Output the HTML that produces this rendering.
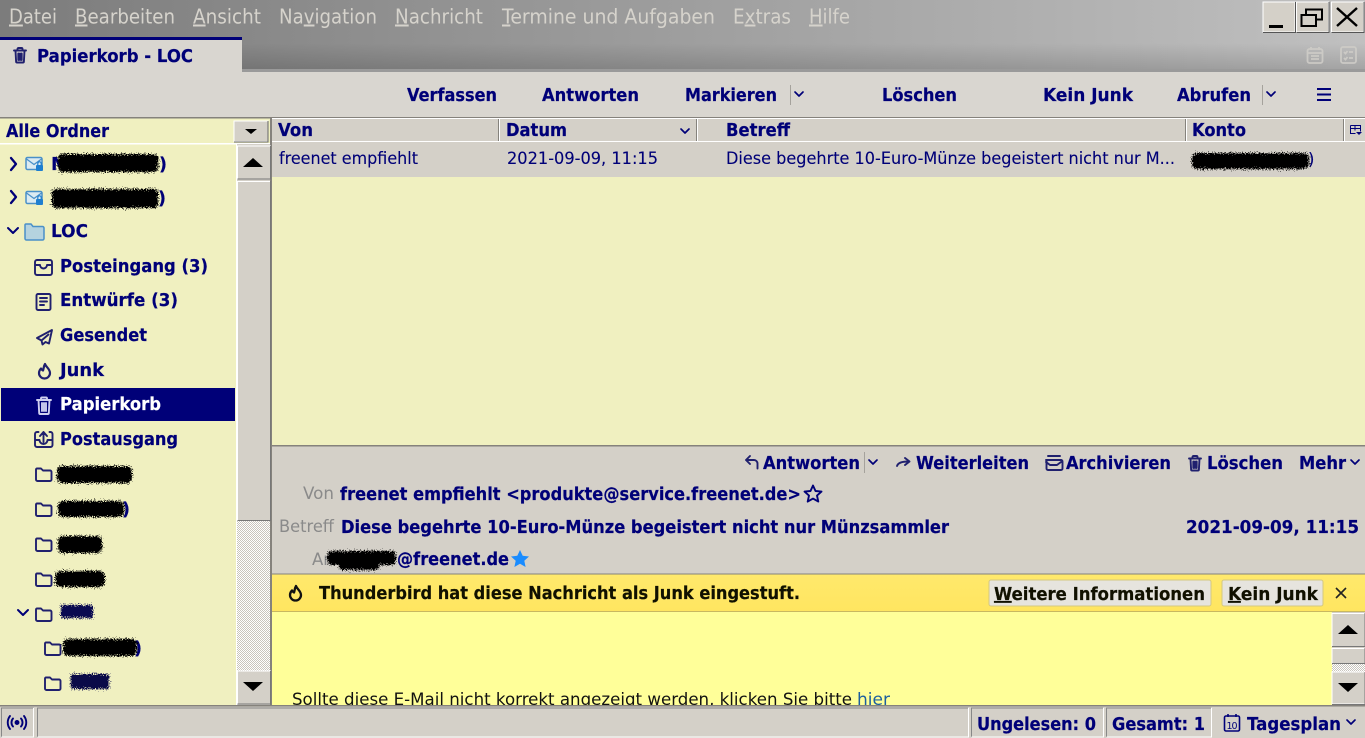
<!DOCTYPE html>
<html><head><meta charset="utf-8"><style>
html,body{margin:0;padding:0;width:1365px;height:738px;overflow:hidden;background:#d4d0c8}
svg{display:block}
text{font-family:"DejaVu Sans","Liberation Sans",sans-serif;white-space:pre}
.m{font-size:20px;fill:#d6d3cc}
.b{font-size:17.500px;font-weight:bold;fill:#000078;stroke:#000078;stroke-width:.2px}
.r{font-size:16.500px;fill:#000078;stroke:#000078;stroke-width:.1px}
.g{font-size:16.500px;fill:#8a8a8a}
.k{font-size:17.500px;font-weight:bold;fill:#111100;stroke:#111100;stroke-width:.2px}
.i{fill:none;stroke:#20206e;stroke-width:1.900px;stroke-linejoin:round;stroke-linecap:round}
.c{fill:none;stroke:#000078;stroke-width:2px;stroke-linecap:round;stroke-linejoin:round}
.s{fill:#000;filter:url(#rough)}
</style></head><body>
<svg xmlns="http://www.w3.org/2000/svg" width="1365" height="738" viewBox="0 0 1365 738">
<defs>
<linearGradient id="tb" x1="0" x2="1" y1="0" y2="0"><stop offset="0" stop-color="#7c7c7c"/><stop offset="1" stop-color="#c0c0c0"/></linearGradient>
<linearGradient id="tb2" x1="0" x2="0" y1="0" y2="1"><stop offset="0" stop-color="#000" stop-opacity="0"/><stop offset=".6" stop-color="#000" stop-opacity="0"/><stop offset="1" stop-color="#000" stop-opacity=".16"/></linearGradient>
<linearGradient id="nb" x1="0" x2="0" y1="0" y2="1"><stop offset="0" stop-color="#ffe96c"/><stop offset="1" stop-color="#ffe560"/></linearGradient>
<pattern id="chk" width="2" height="2" patternUnits="userSpaceOnUse"><rect width="2" height="2" fill="#fff"/><rect width="1" height="1" fill="#c8c4bc"/><rect x="1" y="1" width="1" height="1" fill="#c8c4bc"/></pattern>
<filter id="rough" x="-20%" y="-50%" width="140%" height="200%" color-interpolation-filters="sRGB"><feTurbulence type="fractalNoise" baseFrequency=".9" numOctaves="2" seed="4"/><feDisplacementMap in="SourceGraphic" scale="9" xChannelSelector="R" yChannelSelector="G"/></filter>
<g id="folder"><path class="i" d="M1 3.500a1 1 0 0 1 1-1h4l2 2h7a1.500 1.500 0 0 1 1.500 1.500v7.500a1.500 1.500 0 0 1-1.500 1.500h-12.500a1.500 1.500 0 0 1-1.500-1.500z"/></g>
<g id="trash"><path class="i" d="M2 3.500h12M5.500 3.500v-1.500a1 1 0 0 1 1-1h3a1 1 0 0 1 1 1v1.500M3.500 3.500l.6 11a1 1 0 0 0 1 1h5.800a1 1 0 0 0 1-1l.6-11M6.300 6.500v6.500M8 6.500v6.500M9.700 6.500v6.500"/></g>
<g id="acct"><path d="M1 3a1.500 1.500 0 0 1 1.500-1.500h13a1.500 1.500 0 0 1 1.500 1.500v9a1.500 1.500 0 0 1-1.500 1.500h-13a1.500 1.500 0 0 1-1.500-1.500z" fill="#dcebf2" stroke="#4a90c8" stroke-width="1.500"/><path d="M1.500 3l7.500 5.500 7.500-5.500" fill="none" stroke="#4a90c8" stroke-width="1.300"/><rect x="11" y="9" width="7" height="6" rx="1" fill="#1f7fd0"/><path d="M12.800 9v-1.500a1.700 1.700 0 0 1 3.400 0v1.500" fill="none" stroke="#1f7fd0" stroke-width="1.200"/></g>
<path id="ch" class="c" d="M0 0l5 5 5-5"/>
<path id="chs" class="c" style="stroke-width:1.700px" d="M0 0l4 4 4-4"/>
</defs>

<!-- title / tab bar -->
<rect width="1365" height="72" fill="url(#tb)"/>
<rect width="1365" height="72" fill="url(#tb2)"/>
<rect x="242" y="69" width="1123" height="3" fill="#9a9a9a"/>
<text class="m" x="9" y="23.500" textLength="48" lengthAdjust="spacingAndGlyphs"><tspan text-decoration="underline">D</tspan>atei</text>
<text class="m" x="75" y="23.500" textLength="100" lengthAdjust="spacingAndGlyphs"><tspan text-decoration="underline">B</tspan>earbeiten</text>
<text class="m" x="193" y="23.500" textLength="68" lengthAdjust="spacingAndGlyphs"><tspan text-decoration="underline">A</tspan>nsicht</text>
<text class="m" x="279" y="23.500" textLength="98" lengthAdjust="spacingAndGlyphs">Na<tspan text-decoration="underline">v</tspan>igation</text>
<text class="m" x="395" y="23.500" textLength="88" lengthAdjust="spacingAndGlyphs"><tspan text-decoration="underline">N</tspan>achricht</text>
<text class="m" x="502" y="23.500" textLength="213" lengthAdjust="spacingAndGlyphs"><tspan text-decoration="underline">T</tspan>ermine und Aufgaben</text>
<text class="m" x="733" y="23.500" textLength="58" lengthAdjust="spacingAndGlyphs">E<tspan text-decoration="underline">x</tspan>tras</text>
<text class="m" x="809" y="23.500" textLength="41" lengthAdjust="spacingAndGlyphs"><tspan text-decoration="underline">H</tspan>ilfe</text>

<rect x="0" y="37" width="242" height="36" fill="#d9d6d0"/>
<rect x="0" y="37" width="242" height="3" fill="#000078"/>
<use href="#trash" x="12" y="47"/>
<text class="b" x="37" y="62" textLength="156" lengthAdjust="spacingAndGlyphs">Papierkorb - LOC</text>

<!-- window buttons -->
<g>
<rect x="1263" y="2" width="32" height="30" fill="#d4d0c8" stroke="#fff" stroke-width="1"/><path d="M1295.500 2v30.500H1263" stroke="#555" fill="none"/>
<rect x="1269" y="25" width="14" height="3" fill="#000"/>
<rect x="1296.500" y="2" width="32" height="30" fill="#d4d0c8" stroke="#fff"/><path d="M1329 2v30.500h-32.500" stroke="#555" fill="none"/>
<path d="M1306 14v-4.500h16v10h-6M1301.500 15h14.500v11h-14.500z" fill="none" stroke="#000" stroke-width="2"/>
<rect x="1331.500" y="2" width="32" height="30" fill="#d4d0c8" stroke="#fff"/><path d="M1364 2v30.500h-32.500" stroke="#555" fill="none"/>
<path d="M1337 8l20 18M1357 8l-20 18" stroke="#000" stroke-width="2.400"/>
</g>
<g fill="none" stroke="#cfcdc8" stroke-width="1.800" opacity=".9">
<rect x="1307.500" y="49" width="15" height="14" rx="2"/><path d="M1308 53h14M1311 47v3M1319 47v3M1311 56h8M1311 59h8"/>
<rect x="1341" y="47" width="15" height="16" rx="2"/><path d="M1344 52l1.500 1.500 2-2.500M1344 58l1.500 1.500 2-2.500M1349 52h4M1349 58h4"/>
</g>

<!-- toolbar -->
<rect x="0" y="72" width="1365" height="46" fill="#d9d6d0"/>
<text class="b" x="407" y="101" textLength="90" lengthAdjust="spacingAndGlyphs">Verfassen</text>
<text class="b" x="542" y="101" textLength="97" lengthAdjust="spacingAndGlyphs">Antworten</text>
<text class="b" x="685" y="101" textLength="92" lengthAdjust="spacingAndGlyphs">Markieren</text>
<rect x="790" y="85" width="1" height="20" fill="#a5a29c"/>
<use href="#chs" x="795" y="92"/>
<text class="b" x="882" y="101" textLength="75" lengthAdjust="spacingAndGlyphs">Löschen</text>
<text class="b" x="1043" y="101" textLength="90" lengthAdjust="spacingAndGlyphs">Kein Junk</text>
<text class="b" x="1177" y="101" textLength="74" lengthAdjust="spacingAndGlyphs">Abrufen</text>
<rect x="1262" y="85" width="1" height="20" fill="#a5a29c"/>
<use href="#chs" x="1267" y="92"/>
<path d="M1317 89h14M1317 94.500h14M1317 100h14" stroke="#000078" stroke-width="2" fill="none"/>

<!-- folder pane -->
<rect x="0" y="117" width="272" height="589" fill="#f0f0c0"/>
<rect x="0" y="117" width="1365" height="1.500" fill="#85827c"/>
<rect x="1" y="119" width="269" height="24" fill="#f0f0c0"/>
<rect x="0" y="143" width="271" height="1.500" fill="#fff"/>
<text class="b" x="6" y="137" textLength="103" lengthAdjust="spacingAndGlyphs">Alle Ordner</text>
<rect x="234" y="121" width="34" height="20.500" fill="#d4d0c8" stroke="#fff"/>
<path d="M268 121v21h-34" stroke="#666" fill="none"/>
<path d="M245 129h12l-6 5z" fill="#000"/>
<rect x="270" y="118" width="2" height="588" fill="#85827c"/>

<!-- folder scrollbar -->
<rect x="237" y="144" width="33" height="562" fill="#d4d0c8"/>
<rect x="236" y="144" width="1" height="562" fill="#fff"/>
<rect x="237.500" y="146" width="33" height="33" fill="#d4d0c8" stroke="#fff"/><path d="M270.500 146v33h-33" stroke="#777" fill="none"/>
<path d="M243 167h20l-10-9z" fill="#000"/>
<rect x="237.500" y="181.500" width="33" height="339" fill="#d4d0c8" stroke="#fff"/><path d="M270.500 181v339.500h-33" stroke="#777" fill="none"/>
<rect x="237" y="521" width="33" height="150" fill="url(#chk)"/>
<rect x="237.500" y="671" width="33" height="33" fill="#d4d0c8" stroke="#fff"/><path d="M270.500 671v33h-33" stroke="#777" fill="none"/>
<path d="M243 682h20l-10 9z" fill="#000"/>

<!-- folder tree -->
<path class="c" style="stroke-width:2.300px" d="M11 158l5 6-5 6M11 191l5 6-5 6"/>
<use href="#acct" x="25" y="156"/>
<use href="#acct" x="25" y="190"/>
<text class="b" x="51" y="170">M</text><text class="b" x="159" y="170">)</text>
<rect class="s" x="58" y="154" width="100" height="18" rx="4"/>
<text class="b" x="158" y="204">)</text>
<rect class="s" x="52" y="189" width="106" height="19" rx="4"/>

<use href="#ch" x="8" y="228"/>
<path d="M25 225a1 1 0 0 1 1-1h5l2 2.500h9.500a1.500 1.500 0 0 1 1.500 1.500v10.500a1.500 1.500 0 0 1-1.500 1.500h-16a1.500 1.500 0 0 1-1.500-1.500z" fill="#b5d3df" stroke="#4a90c8" stroke-width="1.500"/>
<text class="b" x="51" y="237" textLength="37" lengthAdjust="spacingAndGlyphs">LOC</text>

<path class="i" d="M37 260h13a2 2 0 0 1 2 2v11a2 2 0 0 1-2 2h-13a2 2 0 0 1-2-2v-11a2 2 0 0 1 2-2zM36 265h4a3.500 3.500 0 0 0 7 0h4"/>
<text class="b" x="60" y="272" textLength="148" lengthAdjust="spacingAndGlyphs">Posteingang (3)</text>

<path class="i" d="M38 294h11a1.500 1.500 0 0 1 1.500 1.500v13a1.500 1.500 0 0 1-1.500 1.500h-11a1.500 1.500 0 0 1-1.500-1.500v-13a1.500 1.500 0 0 1 1.500-1.500zM40 298h7M40 301.500h7M40 305h4"/>
<text class="b" x="60" y="306" textLength="118" lengthAdjust="spacingAndGlyphs">Entwürfe (3)</text>

<path class="i" d="M52 330l-15 8 4.500 2.500 1 4 3-2.500 3.500 1.500zM41.500 340.500l7-6"/>
<text class="b" x="60" y="341" textLength="87" lengthAdjust="spacingAndGlyphs">Gesendet</text>

<path class="i" style="stroke-width:2.200px" d="M45 364c1 3 5 5 5 9a5.500 5.500 0 0 1-11 0c0-2 1-3.500 2-4.500 .5 1 1 1.500 2 2 .8-2 .5-4 2-6.500z"/>
<text class="b" x="60" y="376" textLength="44" lengthAdjust="spacingAndGlyphs">Junk</text>

<rect x="1" y="388" width="234" height="33" fill="#000078"/>
<path class="i" style="stroke:#cfd0f0" d="M37 399h14M41 399v-1.500a1 1 0 0 1 1-1h4a1 1 0 0 1 1 1v1.500M38.500 399l.7 13a1 1 0 0 0 1 1h7.600a1 1 0 0 0 1-1l.7-13M42 402v8M44 402v8M46 402v8" transform="translate(0,1)"/>
<text class="b" x="60" y="410" textLength="101" lengthAdjust="spacingAndGlyphs" style="fill:#fff;stroke:#fff">Papierkorb</text>

<path class="i" d="M37 432h1.500M49.500 432h1M37 432a2 2 0 0 0-2 2v11a2 2 0 0 0 2 2h13.500a2 2 0 0 0 2-2v-11a2 2 0 0 0-2-2M43.500 442v-10M40 436l3.500-4 3.500 4M35.500 440h4a3.500 3.500 0 0 0 8 0h4.500"/>
<text class="b" x="60" y="445" textLength="118" lengthAdjust="spacingAndGlyphs">Postausgang</text>

<use href="#folder" x="35" y="466"/>
<rect class="s" x="57" y="466" width="75" height="17" rx="5"/>
<use href="#folder" x="35" y="501"/>
<text class="b" x="122" y="515">)</text>
<rect class="s" x="58" y="501" width="66" height="16" rx="5"/>
<use href="#folder" x="35" y="536"/>
<rect class="s" x="58" y="536" width="44" height="17" rx="5"/>
<use href="#folder" x="35" y="571"/>
<rect class="s" x="55" y="571" width="50" height="16" rx="5"/>
<use href="#ch" x="18" y="610"/>
<use href="#folder" x="35" y="606"/>
<rect x="61" y="605" width="32" height="13" fill="#0a0a50" filter="url(#rough)"/>
<use href="#folder" x="44" y="640"/>
<text class="b" x="134" y="654">)</text>
<rect class="s" x="63" y="639" width="74" height="17" rx="5"/>
<use href="#folder" x="44" y="675"/>
<rect x="71" y="674" width="38" height="15" fill="#0a0a48" filter="url(#rough)"/>

<!-- thread pane -->
<rect x="272" y="119" width="1093" height="326" fill="#f0f0c0"/>
<rect x="272" y="119" width="1093" height="22" fill="#d4d0c8"/>
<rect x="272" y="118" width="1093" height="1" fill="#fff"/>
<rect x="272" y="141" width="1093" height="1" fill="#fff"/>
<g fill="#fff"><rect x="499" y="119" width="1" height="22"/><rect x="697" y="119" width="1" height="22"/><rect x="1186" y="119" width="1" height="22"/><rect x="1344" y="119" width="1" height="22"/></g>
<g fill="#85827c"><rect x="498" y="119" width="1" height="22"/><rect x="696" y="119" width="1" height="22"/><rect x="1185" y="119" width="1" height="22"/><rect x="1343" y="119" width="1" height="22"/></g>
<text class="b" x="278" y="136" textLength="35" lengthAdjust="spacingAndGlyphs">Von</text>
<text class="b" x="506" y="136" textLength="61" lengthAdjust="spacingAndGlyphs">Datum</text>
<use href="#chs" x="681" y="129"/>
<text class="b" x="726" y="136" textLength="64" lengthAdjust="spacingAndGlyphs">Betreff</text>
<text class="b" x="1192" y="136" textLength="54" lengthAdjust="spacingAndGlyphs">Konto</text>
<path d="M1350.500 125.500h10v6M1350.500 125.500v8h5M1350.500 128.500h10M1355 125.500v5" fill="none" stroke="#000078"/><path d="M1356 132h6l-3 3z" fill="#000078"/>

<rect x="272" y="142" width="1093" height="35" fill="#d4d0c8"/>
<text class="r" x="279" y="164" textLength="139" lengthAdjust="spacingAndGlyphs">freenet empfiehlt</text>
<text class="r" x="507" y="164" textLength="151" lengthAdjust="spacingAndGlyphs">2021-09-09, 11:15</text>
<text class="r" x="726" y="164" textLength="449" lengthAdjust="spacingAndGlyphs">Diese begehrte 10-Euro-Münze begeistert nicht nur M...</text>
<text class="r" x="1308" y="165">)</text>
<rect class="s" x="1192" y="153" width="117" height="16" rx="5"/>

<!-- message header -->
<rect x="272" y="445" width="1093" height="129" fill="#d4d0c8"/>
<rect x="272" y="445" width="1093" height="1.500" fill="#85827c"/>
<path class="i" d="M750 456l-4 4 4 4M746 460h8a3.500 3.500 0 0 1 3.500 3.500v5"/>
<text class="b" x="763" y="469" textLength="97" lengthAdjust="spacingAndGlyphs">Antworten</text>
<rect x="864" y="452" width="1" height="21" fill="#a5a29c"/>
<use href="#chs" x="869" y="460"/>
<path class="i" d="M897 466c1-3 4-4.500 11-4.500M905 458l4.500 3.500-4.500 3.500"/>
<text class="b" x="916" y="469" textLength="113" lengthAdjust="spacingAndGlyphs">Weiterleiten</text>
<path class="i" d="M1048 456h12M1046 460h15a1.500 1.500 0 0 1 1.500 1.500v7a1.500 1.500 0 0 1-1.500 1.500h-13a1.500 1.500 0 0 1-1.500-1.500v-7a1.500 1.500 0 0 1 1.500-1.500zM1046 462l4 3h7l4-3"/>
<text class="b" x="1066" y="469" textLength="105" lengthAdjust="spacingAndGlyphs">Archivieren</text>
<use href="#trash" x="1187" y="455"/>
<text class="b" x="1207" y="469" textLength="76" lengthAdjust="spacingAndGlyphs">Löschen</text>
<text class="b" x="1299" y="469" textLength="47" lengthAdjust="spacingAndGlyphs">Mehr</text>
<use href="#chs" x="1351" y="460"/>

<text class="g" x="303" y="499" textLength="31" lengthAdjust="spacingAndGlyphs">Von</text>
<text class="b" x="340" y="500" textLength="461" lengthAdjust="spacingAndGlyphs">freenet empfiehlt &lt;produkte@service.freenet.de&gt;</text>
<path d="M813 485.500l2.500 5.500 6 .6-4.500 4 1.300 6-5.300-3-5.300 3 1.300-6-4.500-4 6-.6z" fill="none" stroke="#000078" stroke-width="1.900" stroke-linejoin="round"/>
<text class="g" x="279" y="532" textLength="55" lengthAdjust="spacingAndGlyphs">Betreff</text>
<text class="b" x="341" y="533" textLength="608" lengthAdjust="spacingAndGlyphs">Diese begehrte 10-Euro-Münze begeistert nicht nur Münzsammler</text>
<text class="b" x="1186" y="533" textLength="173" lengthAdjust="spacingAndGlyphs">2021-09-09, 11:15</text>
<text class="g" x="312" y="565">An</text>
<rect class="s" x="339" y="558" width="40" height="12" rx="4"/>
<rect class="s" x="327" y="551" width="69" height="14" rx="5"/>
<text class="b" x="397" y="565" textLength="112" lengthAdjust="spacingAndGlyphs">@freenet.de</text>
<path d="M520 550l2.700 5.800 6.300.7-4.700 4.300 1.300 6.200-5.600-3.200-5.600 3.200 1.300-6.200-4.700-4.300 6.300-.7z" fill="#1a8cff"/>

<!-- notification -->
<rect x="272" y="574" width="1093" height="38" fill="url(#nb)"/>
<rect x="272" y="573.500" width="1093" height="1" fill="#85827c"/>
<rect x="272" y="611" width="1093" height="1" fill="#c8b860"/>
<path d="M296 586c1 3 5 5 5 9a5.500 5.500 0 0 1-11 0c0-2 1-3.500 2-4.500 .5 1 1 1.500 2 2 .8-2 .5-4 2-6.500z" fill="none" stroke="#111" stroke-width="2.300" stroke-linejoin="round"/>
<text class="k" x="319" y="599" textLength="481" lengthAdjust="spacingAndGlyphs">Thunderbird hat diese Nachricht als Junk eingestuft.</text>
<rect x="989" y="580" width="222" height="26" rx="2" fill="#e6e4de" stroke="#d4c880"/>
<text class="k" x="994" y="600" textLength="211" lengthAdjust="spacingAndGlyphs"><tspan text-decoration="underline">W</tspan>eitere Informationen</text>
<rect x="1222" y="580" width="101" height="26" rx="2" fill="#e6e4de" stroke="#d4c880"/>
<text class="k" x="1228" y="600" textLength="90" lengthAdjust="spacingAndGlyphs"><tspan text-decoration="underline">K</tspan>ein Junk</text>
<path d="M1336 588l10 10M1346 588l-10 10" stroke="#222" stroke-width="1.600"/>

<!-- body -->
<rect x="272" y="612" width="1093" height="94" fill="#ffff99"/>
<text x="292" y="705" font-size="17" fill="#111" textLength="560" lengthAdjust="spacingAndGlyphs">Sollte diese E-Mail nicht korrekt angezeigt werden, klicken Sie bitte</text>
<text x="857" y="705" font-size="17" fill="#1c5f9e" textLength="33" lengthAdjust="spacingAndGlyphs">hier</text>
<rect x="1332" y="612" width="33" height="94" fill="#d4d0c8"/>
<rect x="1332" y="664" width="33" height="8" fill="url(#chk)"/>
<rect x="1332" y="613.500" width="33" height="33" fill="#d4d0c8" stroke="#fff"/><path d="M1365 613v33.500h-33" stroke="#777" fill="none"/>
<path d="M1338 634h20l-10-9z" fill="#000"/>
<rect x="1332" y="648.500" width="33" height="15" fill="#d4d0c8" stroke="#fff"/><path d="M1365 648v15.500h-33" stroke="#777" fill="none"/>
<rect x="1332" y="672" width="33" height="32" fill="#d4d0c8" stroke="#fff"/><path d="M1365 672v32.500h-33" stroke="#777" fill="none"/>
<path d="M1338 683h20l-10 9z" fill="#000"/>

<!-- status bar -->
<rect x="0" y="705" width="1365" height="33" fill="#d4d0c8"/>
<rect x="0" y="705" width="1365" height="1.500" fill="#85827c"/>
<g fill="none" stroke="#888" stroke-width="1">
<path d="M1.500 737v-29h32" /><path d="M37.500 737v-29H968"/><path d="M971.500 737v-29H1103"/><path d="M1106.500 737v-29H1211"/>
</g>
<g fill="none" stroke="#fff" stroke-width="1">
<path d="M33.500 708v29H1.500"/><path d="M968.500 708v29H37.500"/><path d="M1103.500 708v29H971.500"/><path d="M1211.500 708v29H1106.500"/>
</g>
<g fill="none" stroke="#000078" stroke-width="1.900" stroke-linecap="round">
<circle cx="17" cy="722.500" r="1.500" fill="#000078"/>
<path d="M13 718.500a6 6 0 0 0 0 8M21 718.500a6 6 0 0 1 0 8M10 716a10.500 10.500 0 0 0 0 13M24 716a10.500 10.500 0 0 1 0 13"/>
</g>
<text class="b" x="977" y="730" textLength="119" lengthAdjust="spacingAndGlyphs">Ungelesen: 0</text>
<text class="b" x="1112" y="730" textLength="93" lengthAdjust="spacingAndGlyphs">Gesamt: 1</text>
<path d="M1226 716h12a1.500 1.500 0 0 1 1.500 1.500v12a1.500 1.500 0 0 1-1.500 1.500h-12a1.500 1.500 0 0 1-1.500-1.500v-12a1.500 1.500 0 0 1 1.500-1.500zM1228 714v3M1236 714v3" fill="none" stroke="#000078" stroke-width="1.600"/>
<text x="1226.500" y="729" font-size="9.500" fill="#000078" textLength="11">10</text>
<text class="b" x="1247" y="730" textLength="94" lengthAdjust="spacingAndGlyphs">Tagesplan</text>
<use href="#chs" x="1347" y="720"/>
</svg>
</body></html>
